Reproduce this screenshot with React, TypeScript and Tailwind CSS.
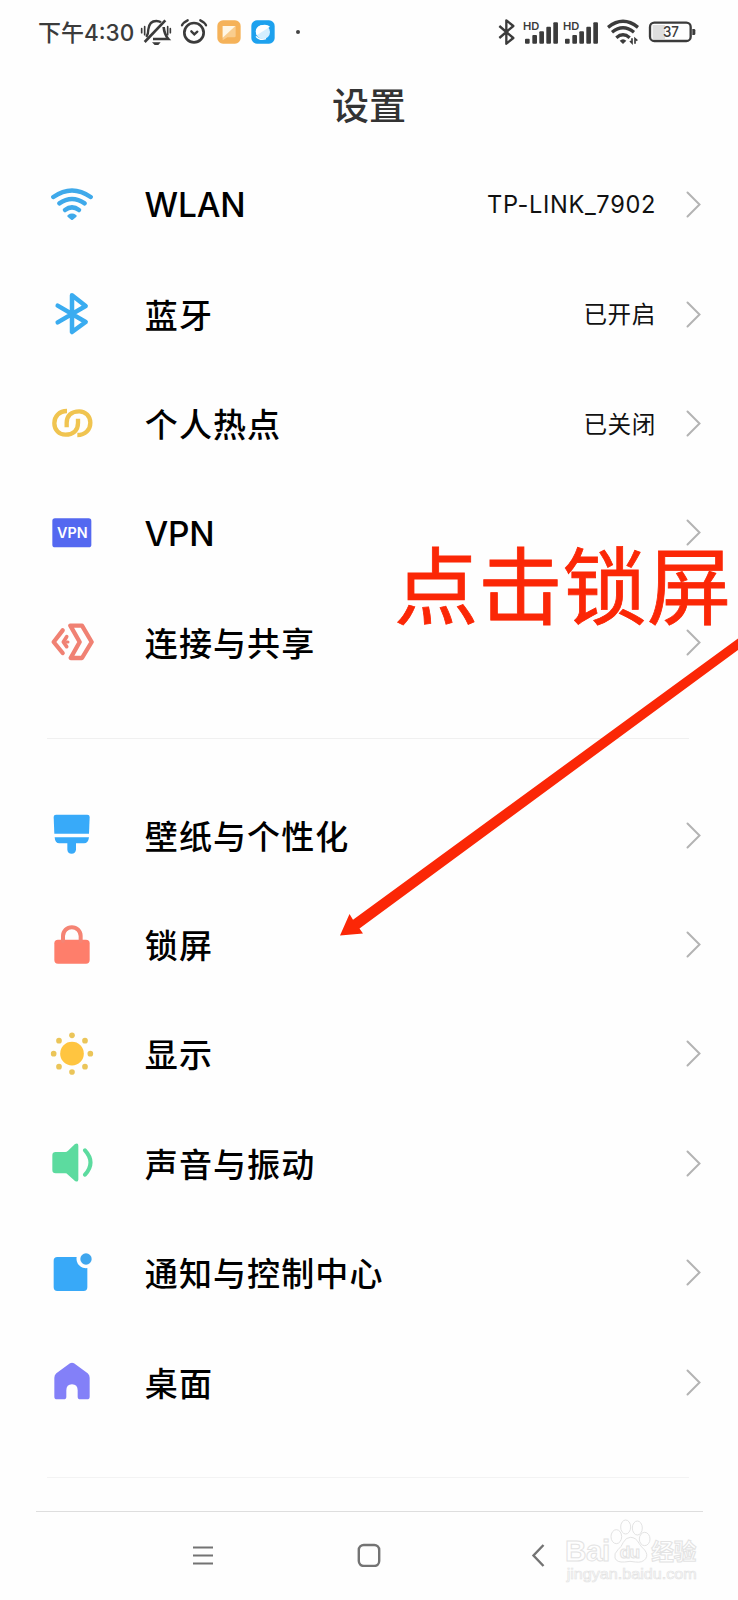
import type { ReactNode } from "react";

interface SettingItem {
    label: string;
    value?: string;
    icon: ReactNode;
    latin?: boolean;
}

function Icon({ children }: { children: ReactNode }) {
    return (
        <svg viewBox="0 0 132 132" className="h-11 w-11 flex-shrink-0" fill="none" strokeLinecap="round" strokeLinejoin="round">
            {children}
        </svg>
    );
}

const connectionItems: SettingItem[] = [
    {
        label: "WLAN",
        value: "TP-LINK_7902",
        latin: true,
        icon: (
            <Icon>
                <g stroke="#3fa9ea" strokeWidth="13.500">
                    <path d="M10 42Q66 3 122 42" />
                    <path d="M28 61Q66 35 104 61" />
                    <path d="M45 81Q66 65 87 81" />
                </g>
                <path d="M56 99Q66 92 76 99L66 107Z" fill="#3fa9ea" stroke="#3fa9ea" strokeWidth="8" />
            </Icon>
        ),
    },
    {
        label: "蓝牙",
        value: "已开启",
        icon: (
            <Icon>
                <path d="M23 41L107 90L66 120V10L107 42L23 91" stroke="#3aacf0" strokeWidth="13.500" />
            </Icon>
        ),
    },
    {
        label: "个人热点",
        value: "已关闭",
        icon: (
            <Icon>
                <g stroke="#f0c450" strokeWidth="13" strokeLinecap="butt">
                    <path d="M51 30C28 30 13 46 13 67C13 87 28 101 46 101C70 101 84 88 84 66V53" />
                    <path d="M82 102C106 102 121 86 121 65C121 45 106 31 88 31C64 31 50 44 50 66V79" />
                </g>
            </Icon>
        ),
    },
    {
        label: "VPN",
        latin: true,
        icon: (
            <Icon>
                <rect x="7" y="22" width="117" height="87" rx="8" fill="#5468f0" />
                <text x="21" y="81" fontFamily="Inter, sans-serif" fontWeight="600" fontSize="43" fill="#fff" textLength="92">
                    VPN
                </text>
            </Icon>
        ),
    },
    {
        label: "连接与共享",
        icon: (
            <Icon>
                <g stroke="#f08173" strokeWidth="13">
                    <path d="M38 31L11 66L38 99" />
                    <path d="M50 50L40 66L50 80" strokeWidth="11" />
                    <path d="M50 66H54" strokeWidth="9" />
                    <path d="M61 17H96L125 66L96 114H62L89 66Z" />
                </g>
            </Icon>
        ),
    },
];

const deviceItems: SettingItem[] = [
    {
        label: "壁纸与个性化",
        icon: (
            <Icon>
                <g fill="#38aaf9">
                    <path d="M18 5H112Q119 5 119 12L117 62H13L11 12Q11 5 18 5Z" />
                    <path d="M14 73H117Q115 91 102 91H78V110Q76 122 65 122Q53 122 52 110V91H28Q15 91 14 73Z" />
                </g>
            </Icon>
        ),
    },
    {
        label: "锁屏",
        icon: (
            <Icon>
                <rect x="13" y="50" width="106" height="72" rx="11" fill="#fe7e6b" />
                <path d="M39 54V39A26.500 26.500 0 0 1 92 39V54" stroke="#f58474" strokeWidth="12" />
            </Icon>
        ),
    },
    {
        label: "显示",
        icon: (
            <Icon>
                <circle cx="66" cy="65" r="35.500" fill="#ffc540" />
                <g fill="#ebc559">
                    <circle cx="66" cy="10" r="8.500" />
                    <circle cx="105" cy="26" r="8.500" />
                    <circle cx="121" cy="65" r="8.500" />
                    <circle cx="105" cy="104" r="8.500" />
                    <circle cx="66" cy="120" r="8.500" />
                    <circle cx="27" cy="104" r="8.500" />
                    <circle cx="11" cy="65" r="8.500" />
                    <circle cx="27" cy="26" r="8.500" />
                </g>
            </Icon>
        ),
    },
    {
        label: "声音与振动",
        icon: (
            <Icon>
                <path d="M17 33H46Q50 33 54 29L75 9Q85 4 85 14V116Q84 125 75 120L54 101Q50 97 46 97H17Q7 97 7 87V43Q7 33 17 33Z" fill="#5cdb9f" />
                <path d="M105 28Q138 64 105 101" stroke="#5cdb9f" strokeWidth="12" />
            </Icon>
        ),
    },
    {
        label: "通知与控制中心",
        icon: (
            <Icon>
                <path d="M22 18H80A28 28 0 0 0 112 51V109Q112 120 101 120H22Q11 120 11 109V29Q11 18 22 18Z" fill="#38a9f8" />
                <circle cx="108" cy="24" r="17" fill="#3fa6ee" />
            </Icon>
        ),
    },
    {
        label: "桌面",
        icon: (
            <Icon>
                <path d="M60 10Q66 6 72 10L113 40Q119 45 119 53V110Q119 118 111 118H91Q83 118 83 110V91Q83 73 66 73Q49 73 49 91V110Q49 118 41 118H21Q13 118 13 110V53Q13 45 19 40Z" fill="#8380f8" />
            </Icon>
        ),
    },
];

function Row({ label, value, icon, latin }: SettingItem) {
    return (
        <div className="flex h-[109.4px] items-center pl-[50px] pr-[37px]">
            {icon}
            <span
                className={
                    latin
                        ? "ml-[50.5px] pt-[3px] font-['Inter',sans-serif] text-[33.5px] leading-none font-medium tracking-[-0.2px] text-black"
                        : "ml-[50.8px] text-[33px] leading-none font-medium tracking-[1.1px] text-black"
                }
            >
                {label}
            </span>
            {value && (
                <span
                    className={
                        latin
                            ? "ml-auto font-['Inter',sans-serif] text-[23.6px] leading-none tracking-[0.65px] text-[#111]"
                            : "ml-auto text-[23.6px] leading-none tracking-[0.6px] text-[#111]"
                    }
                >
                    {value}
                </span>
            )}
            <svg viewBox="0 0 15 27" className={value ? "ml-[30px] h-[27px] w-[15px]" : "ml-auto h-[27px] w-[15px]"} fill="none">
                <path d="M1.500 1.500L13.500 13.500L1.500 25.500" stroke="#b3b3b3" strokeWidth="2" strokeLinecap="round" />
            </svg>
        </div>
    );
}

function Signal({ className }: { className: string }) {
    return (
        <svg viewBox="0 0 106 78" className={`h-[26px] w-[35.3px] ${className}`} fill="#3b3b3b">
            <text x="0" y="32" fontFamily="Inter, sans-serif" fontWeight="600" fontSize="32" textLength="49" lengthAdjust="spacingAndGlyphs">
                HD
            </text>
            <rect x="6" y="59" width="14" height="15" rx="3" />
            <rect x="28" y="48" width="14" height="26" rx="3" />
            <rect x="49" y="37" width="14" height="37" rx="3" />
            <rect x="70" y="23" width="14" height="51" rx="3" />
            <rect x="91" y="10" width="14" height="64" rx="3" />
        </svg>
    );
}

function StatusBar() {
    return (
        <div className="flex h-16 items-center pl-[38px] text-[#3b3b3b]">
            <span className="w-[96px] text-[23px] leading-none font-medium whitespace-nowrap">
                下午<span className="font-['Inter',sans-serif] text-[22.5px]">4:30</span>
            </span>
            {/* muted bell */}
            <svg viewBox="0 0 96 84" className="ml-[5.5px] h-7 w-8" fill="none" stroke="currentColor" strokeWidth="7">
                <path d="M19 57Q25 49 25 34Q28 9 49 9Q57 9 63 13" />
                <path d="M71 27Q73 49 85 63H39" strokeWidth="8" />
                <path d="M14 72L76 7" strokeWidth="8" />
                <path d="M36 73H62L55 81H44Z" fill="currentColor" stroke="none" />
                <path d="M5 32V44M14 26V50M83 26V50M91 32V44" strokeWidth="5" strokeLinecap="round" />
            </svg>
            <svg viewBox="0 0 84 84" className="ml-[8px] h-7 w-7" fill="none" stroke="currentColor" strokeWidth="8" strokeLinecap="round">
                <circle cx="42" cy="44" r="29" />
                <path d="M6 22Q10 13 23 7M61 7Q74 13 78 22" strokeWidth="7" />
                <path d="M34 40L43 49L52 41" strokeWidth="7" />
            </svg>
            <svg viewBox="0 0 72 72" className="ml-[9px] h-6 w-6">
                <rect x="1" y="1" width="70" height="70" rx="17" fill="#f5b259" />
                <path d="M17 18H56V48Q56 52 52 52H31L17 61Z" fill="#f9cd8e" />
                <path d="M17 18H55L17 53Z" fill="#fff7e6" />
            </svg>
            <svg viewBox="0 0 72 72" className="ml-[10.5px] h-6 w-6">
                <rect x="1" y="1" width="70" height="70" rx="17" fill="#1da1ee" />
                <circle cx="36" cy="36" r="21" fill="#d4efff" />
                <path d="M17 46Q8 24 29 16Q48 11 57 20Z" fill="#fff" />
                <path d="M15 49Q27 63 45 56" stroke="#fff" strokeWidth="4" fill="none" />
            </svg>
            <span className="ml-[20.5px] h-1 w-1 rounded-full bg-[#444]" />

            <svg viewBox="0 0 54 84" className="ml-[198px] h-7 w-[18px]" fill="none" stroke="currentColor" strokeWidth="7" strokeLinejoin="round">
                <path d="M4 24L46 60L25 77V7L46 24L4 60" />
            </svg>
            <Signal className="ml-[7px]" />
            <Signal className="ml-[5.7px]" />
            <svg viewBox="0 0 96 78" className="ml-[8px] h-[26px] w-8" fill="none" stroke="currentColor" strokeWidth="10">
                <path d="M3 25Q48 -11 93 25" />
                <path d="M15 40Q48 13 81 40" />
                <path d="M28 56Q48 39 68 56" />
                <path d="M38 65Q48 56 58 65L48 75Z" fill="currentColor" stroke="none" />
                <path d="M75 58V72L69 66M84 74V59L91 65" strokeWidth="5" />
            </svg>
            <svg viewBox="0 0 144 66" className="ml-[9px] h-[22px] w-12">
                <rect x="14" y="12" width="37" height="42" fill="#dedede" />
                <rect x="6" y="5" width="122" height="55" rx="13" fill="none" stroke="#3b3b3b" strokeWidth="7" />
                <path d="M133 24H138Q142 24 142 28V38Q142 42 138 42H133Z" fill="#3b3b3b" />
                <text x="45" y="48" fontFamily="Inter, sans-serif" fontWeight="500" fontSize="44" fill="#3b3b3b" textLength="48" lengthAdjust="spacingAndGlyphs">
                    37
                </text>
            </svg>
        </div>
    );
}

function Watermark() {
    return (
        <svg viewBox="0 0 402 198" className="absolute top-[1518px] left-[564px] h-[66px] w-[134px]" fill="#fefefe" stroke="#e3e3e3" strokeWidth="3">
            <text x="3" y="130" fontFamily="Liberation Sans, sans-serif" fontWeight="700" fontSize="89" textLength="136">
                Bai
            </text>
            <ellipse cx="157" cy="56" rx="16" ry="21" />
            <ellipse cx="185" cy="27" rx="15" ry="21" />
            <ellipse cx="220" cy="30" rx="15" ry="21" />
            <ellipse cx="242" cy="63" rx="16" ry="20" />
            <path d="M199 58Q216 58 225 76Q232 87 242 96Q253 110 245 122Q236 135 214 132Q198 128 182 132Q158 134 153 120Q149 107 162 95Q172 87 178 73Q186 58 199 58Z" />
            <text x="167" y="121" fontFamily="Liberation Sans, sans-serif" fontWeight="700" fontSize="52" textLength="61">
                du
            </text>
            <text x="262" y="126" fontFamily="Noto Sans CJK SC, sans-serif" fontWeight="700" fontSize="68" textLength="135">
                经验
            </text>
            <text x="8" y="183" fontFamily="Liberation Sans, sans-serif" fontSize="45" strokeWidth="2" textLength="390" lengthAdjust="spacingAndGlyphs">
                jingyan.baidu.com
            </text>
        </svg>
    );
}

export default function App() {
    return (
        <div className="relative h-[1600px] w-[738px] overflow-hidden bg-[#fefefe] font-['Noto_Sans_CJK_SC',sans-serif]">
            <StatusBar />
            <h1 className="flex h-[86px] items-start justify-center pt-[21.5px] text-[37px] leading-none font-medium text-[#333]">设置</h1>

            <div>
                {connectionItems.map((item) => (
                    <Row key={item.label} {...item} />
                ))}
            </div>
            <div className="mt-[41px] mr-[49px] mb-[41.5px] ml-[47px] h-px bg-[#f0f0f0]" />
            <div>
                {deviceItems.map((item) => (
                    <Row key={item.label} {...item} />
                ))}
            </div>
            <div className="mt-[40.5px] mr-[49px] ml-[47px] h-px bg-[#f3f3f3]" />

            <div className="mx-[35.5px] mt-[32.5px] flex h-[89px] items-start border-t border-[#dedede] pt-[31.5px]">
                <svg viewBox="0 0 24 24" className="ml-[155px] h-6 w-6" fill="none" stroke="#737373" strokeWidth="2">
                    <path d="M2 4.500H22M2 12.500H22M2 20.500H22" />
                </svg>
                <svg viewBox="0 0 24 24" className="ml-[142.5px] h-6 w-6" fill="none" stroke="#737373" strokeWidth="2.400">
                    <rect x="1.800" y="2" width="20.400" height="21" rx="5" />
                </svg>
                <svg viewBox="0 0 24 24" className="ml-[145.500px] h-6 w-6" fill="none" stroke="#737373" strokeWidth="2.400">
                    <path d="M16.500 2L6.500 12.500L16.500 23" />
                </svg>
            </div>

            <Watermark />

            {/* annotation */}
            <span className="absolute top-[539px] left-[394px] text-[84.300px] leading-none whitespace-nowrap text-[#fb2706] [-webkit-text-stroke:0.8px_#fb2706]">点击锁屏</span>
            <svg viewBox="338 630 400 310" className="absolute top-[630px] left-[338px] h-[310px] w-[400px]" fill="#fb2706">
                <path d="M340 935.500L349.500 914L353 919.700L738 638.500V650L359.500 928.500L363 933.500Z" />
            </svg>
        </div>
    );
}
